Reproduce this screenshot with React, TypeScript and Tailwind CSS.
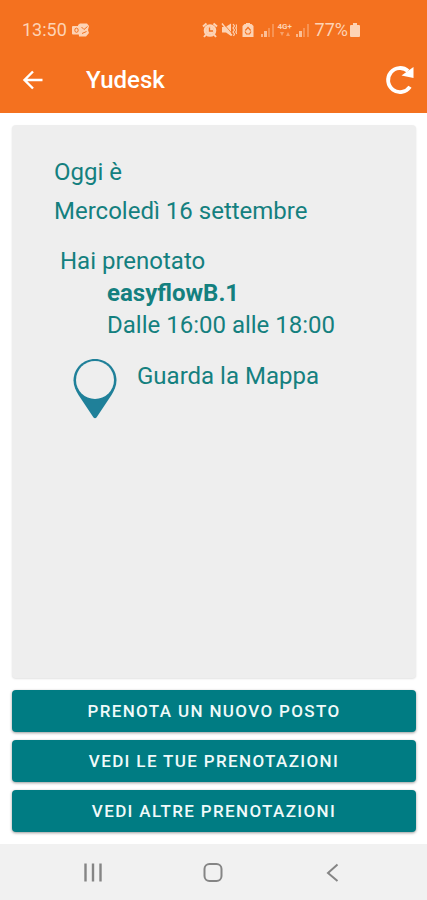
import React from 'react';

const ACTIONS = ['Prenota un nuovo posto', 'Vedi le tue prenotazioni', 'Vedi altre prenotazioni'];

const Signal = () => (
  <svg viewBox="0 0 15 14" className="h-[14px] w-[15px]" fill="currentColor">
    <rect x="1" y="11" width="2" height="3" opacity=".7" />
    <rect x="4" y="8" width="3" height="6" opacity=".8" />
    <rect x="8" y="5" width="2" height="9" opacity=".35" />
    <rect x="12" y="1" width="2" height="13" opacity=".35" />
  </svg>
);

const StatusBar = () => (
  <div className="flex h-[50px] items-center pt-[10px] pr-[67px] pl-[22px] text-[18px] leading-6 text-[#fdd3b5]">
    <span>13:50</span>
    <svg viewBox="0 0 18 14" className="ml-[5px] h-[14px] w-[18px]" fill="currentColor">
      <path d="M6 2l2-1.500h7L17 3l-1 4 1 3-3 3.500H7z" />
      <rect x="0" y="3" width="9" height="8.500" rx="1" />
      <ellipse cx="4.500" cy="7.200" rx="1.700" ry="2.100" fill="none" stroke="#f4711f" strokeWidth="1" />
      <path d="M9.500 4l2.500 2.500L15.500 3.500M10 10.500l4.500-2" fill="none" stroke="#f4711f" strokeWidth="1" />
    </svg>
    <div className="ml-auto flex items-center">
      <svg viewBox="0 0 16 16" className="h-4 w-4" fill="none" stroke="currentColor">
        <circle cx="8" cy="8.500" r="5" strokeWidth="2.600" />
        <circle cx="8" cy="8.500" r="4" fill="currentColor" stroke="none" />
        <path d="M1 4.500l3.500-3M15 4.500l-3.500-3M4 12.500l-2 2.500M12 12.500l2 2.500" strokeWidth="2" />
        <path d="M7.500 5.500v3.500h3.500" stroke="#f4711f" strokeWidth="1.300" />
      </svg>
      <svg viewBox="0 0 16 16" className="ml-[3px] h-4 w-4" fill="currentColor">
        <path d="M1 5h3.500L10 1.500v12.500L5 10.500H1z" />
        <path d="M1 1.500l10 12" stroke="currentColor" strokeWidth="1.600" />
        <path d="M2.500 1.500l9 10.500" stroke="#f4711f" strokeWidth=".8" />
        <path d="M12 2l1.500 2-1.500 2 1.500 2-1.500 2 1.500 2-1 2M15 2.500L16 4l-1.200 2L16 8l-1.200 2L16 12" fill="none" stroke="currentColor" strokeWidth="1.200" />
      </svg>
      <svg viewBox="0 0 12 16" className="ml-[5px] h-4 w-3" fill="currentColor">
        <path d="M4 1h4v1h1.500L11.500 4v11H.5V4l2-2H4z" />
        <path d="M3.300 8.500L6 5.500l2.700 3M3 9.500l1.500 2.500h3L9 9.500" fill="none" stroke="#f4711f" strokeWidth="1.200" />
      </svg>
      <span className="ml-[6px]"><Signal /></span>
      <span className="ml-[2px] flex w-[16px] flex-col items-center">
        <span className="text-[8px] leading-[8px] font-bold">4G+</span>
        <svg viewBox="0 0 10 6" className="h-[6px] w-[10px]" fill="currentColor" opacity=".5">
          <path d="M0 1h4L2 5zM6 5h4L8 1z" />
        </svg>
      </span>
      <span className="ml-[2px]"><Signal /></span>
      <span className="ml-[5px]">77%</span>
      <svg viewBox="0 0 10 14" className="ml-[2px] h-[14px] w-[10px]" fill="currentColor">
        <path d="M3 0h4v2h2a1 1 0 0 1 1 1v10a1 1 0 0 1-1 1H1a1 1 0 0 1-1-1V3a1 1 0 0 1 1-1h2z" />
      </svg>
    </div>
  </div>
);

const Header = () => (
  <header className="bg-[#f4711f]">
    <StatusBar />
    <div className="flex h-[63px] items-center pr-[12px] pb-[4px] pl-[22px] text-white">
      <button aria-label="Indietro">
        <svg viewBox="0 0 22 20" className="h-5 w-[22px]" fill="none" stroke="currentColor" strokeWidth="2.400">
          <path d="M20.500 10H3M11 1.500L2.500 10l8.500 8.500" />
        </svg>
      </button>
      <h1 className="ml-[42px] text-[24px] leading-8 font-medium">Yudesk</h1>
      <button aria-label="Aggiorna" className="ml-auto">
        <svg viewBox="0 0 30 30" className="h-[30px] w-[30px]" fill="none" stroke="currentColor">
          <path d="M25 21.800A12 12 0 1 1 23 6" strokeWidth="3.800" />
          <path d="M28.500 2V13L16.500 10.500z" fill="currentColor" stroke="none" />
        </svg>
      </button>
    </div>
  </header>
);

const BookingCard = () => (
  <section className="flex-1 rounded-sm bg-[#eeeeee] px-[42px] pt-[31px] text-[24px] leading-8 text-[#14807f] shadow-[0_1px_2px_rgba(0,0,0,0.12)]">
    <p>Oggi è</p>
    <p className="mt-[7px]">Mercoledì 16 settembre</p>
    <div className="mt-[18px] pl-[6px]">
      <p>Hai prenotato</p>
      <div className="pl-[47px]">
        <p className="font-bold">easyflowB.1</p>
        <p>Dalle 16:00 alle 18:00</p>
      </div>
    </div>
    <a href="#mappa" className="mt-[18px] ml-[19px] flex items-start gap-[20px]">
      <svg viewBox="0 0 44 60" className="h-[60px] w-[44px]">
        <path d="M22 0C10 0 .5 9.500 .5 21.500C.5 27 3 32 5.500 36L20.500 58.500Q22 60 23.500 58.500L38.500 36C41 32 43.500 27 43.500 21.500C43.500 9.500 34 0 22 0z" fill="#1f8099" />
        <ellipse cx="22" cy="21" rx="19" ry="19" fill="#eeeeee" />
      </svg>
      <span className="pt-px">Guarda la Mappa</span>
    </a>
  </section>
);

const NavBar = () => (
  <nav className="grid h-14 grid-cols-3 items-center bg-[#f1f1f1] px-[33px] text-[#858585]">
    <button aria-label="Recenti" className="flex justify-center">
      <svg viewBox="0 0 20 20" className="h-5 w-5" stroke="currentColor" strokeWidth="2.400">
        <path d="M2.500 1.500v18M10 1.500v18M17.500 1.500v18" />
      </svg>
    </button>
    <button aria-label="Home" className="flex justify-center">
      <svg viewBox="0 0 20 20" className="h-5 w-5" fill="none" stroke="currentColor" strokeWidth="2">
        <rect x="1.500" y="2" width="17" height="17" rx="5" />
      </svg>
    </button>
    <button aria-label="Indietro" className="flex justify-center">
      <svg viewBox="0 0 20 20" className="h-5 w-5" fill="none" stroke="currentColor" strokeWidth="2">
        <path d="M13.500 2.500L4 11l9.500 8" />
      </svg>
    </button>
  </nav>
);

export default function App() {
  return (
    <div className="flex min-h-screen flex-col bg-white font-[Roboto,sans-serif]">
      <Header />
      <main className="flex flex-1 flex-col py-3 pr-[11px] pl-3">
        <BookingCard />
        <div className="mt-3 flex flex-col gap-2">
          {ACTIONS.map((label) => (
            <button
              key={label}
              className="h-[42px] rounded bg-[#007c83] text-[17px] leading-6 font-medium tracking-[0.08em] text-[#f0fafa] uppercase shadow-[0_1px_3px_rgba(0,0,0,0.4)]"
            >
              {label}
            </button>
          ))}
        </div>
      </main>
      <NavBar />
    </div>
  );
}
